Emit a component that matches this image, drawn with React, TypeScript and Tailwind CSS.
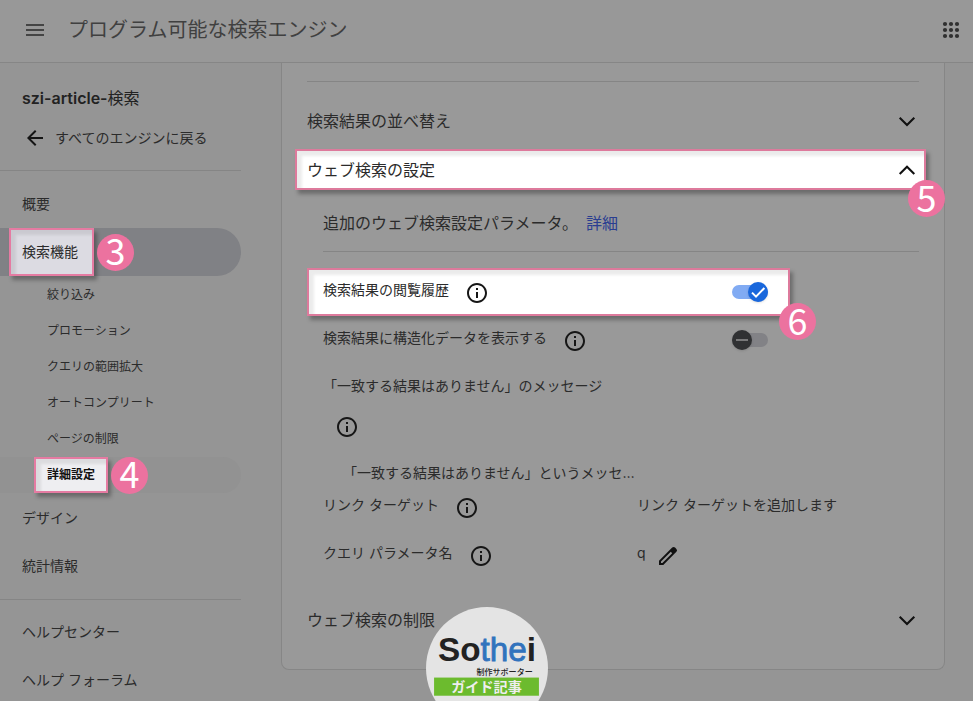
import React, { useState } from 'react';
import { MdArrowBack, MdMenu, MdOutlineInfo } from 'react-icons/md';

const subItems = ['絞り込み', 'プロモーション', 'クエリの範囲拡大', 'オートコンプリート', 'ページの制限'];

const Badge: React.FC<{ n: number; className: string }> = ({ n, className }) => (
  <span
    className={`absolute z-10 flex size-[37px] items-center justify-center rounded-full bg-[#ec729f] pb-1.5 font-['Noto_Sans_CJK_JP',sans-serif] text-4xl leading-9 text-white ${className}`}
  >
    {n}
  </span>
);

const Chevron: React.FC<{ up?: boolean }> = ({ up }) => (
  <svg viewBox="0 0 24 24" className="size-6 text-[#111]" fill="none" stroke="currentColor" strokeWidth="2.1">
    <path d={up ? 'M4.7 16 12 8.7l7.3 7.3' : 'M4.7 8.7 12 16l7.3-7.3'} />
  </svg>
);

const InfoButton: React.FC<{ label: string }> = ({ label }) => (
  <button type="button" aria-label={label} className="mt-px shrink-0 text-[#161616]">
    <MdOutlineInfo size={24} />
  </button>
);

const Toggle: React.FC<{ label: string; initial: boolean }> = ({ label, initial }) => {
  const [on, setOn] = useState(initial);

  return (
    <label className="relative flex h-5 w-9 cursor-pointer items-center">
      <input
        type="checkbox"
        role="switch"
        aria-label={label}
        className="sr-only"
        checked={on}
        onChange={() => setOn(!on)}
      />
      <span className={`h-3.5 w-full rounded-full ${on ? 'bg-[#81abf3]' : 'bg-[#828286]'}`} />
      <span
        className={`absolute flex size-5 items-center justify-center rounded-full shadow ${
          on ? 'right-0 bg-[#1967dc]' : 'left-0 bg-[#303133]'
        }`}
      >
        <svg viewBox="0 0 20 20" className="size-5" fill="none" stroke={on ? '#fff' : '#999'} strokeWidth={on ? 2 : 1.4}>
          <path d={on ? 'M4 10.6 8 14.6 16.4 6' : 'M4 10h12'} />
        </svg>
      </span>
    </label>
  );
};

const Sidebar: React.FC = () => (
  <nav className="w-[281px] shrink-0 bg-[#959595] text-sm text-[#2b2b2b]">
    <h2 className="pt-[23px] pl-[22px] text-base leading-6 text-[#222]">
      <span className="font-semibold">szi-article-</span>検索
    </h2>
    <a href="#engines" className="mt-4 flex h-6 items-center gap-2 pl-[23px]">
      <MdArrowBack size={24} className="text-[#151515]" />
      すべてのエンジンに戻る
    </a>
    <hr className="mt-5 mr-10 border-[#858585]" />
    <a href="#overview" className="mt-[9px] flex h-12 items-center pl-[22px]">概要</a>
    <a href="#features" className="relative mr-10 flex h-12 items-center rounded-r-full bg-[#808185] pl-[9px]">
      <span className="flex h-12 items-center border-2 border-[#e57ba2] bg-[#dcdbe2] pr-3.5 pl-[11px] shadow-[3px_4px_4px_rgba(0,0,0,0.3),inset_5px_5px_3px_rgba(0,0,0,0.08)]">
        検索機能
      </span>
      <Badge n={3} className="left-[97px]" />
    </a>
    <ul className="py-px text-xs">
      {subItems.map((item) => (
        <li key={item}>
          <a href="#sub" className="flex h-9 items-center pl-[47px]">{item}</a>
        </li>
      ))}
      <li>
        <a href="#advanced" className="relative mr-10 flex h-9 items-center rounded-r-full bg-[#929292] pl-[34px]">
          <span className="flex h-9 items-center border-2 border-[#e57ba2] bg-[#eeeef1] px-[11px] font-bold text-[#111] shadow-[3px_4px_4px_rgba(0,0,0,0.3),inset_5px_5px_3px_rgba(0,0,0,0.08)]">
            詳細設定
          </span>
          <Badge n={4} className="left-[111px]" />
        </a>
      </li>
    </ul>
    <a href="#design" className="flex h-12 items-center pl-[22px]">デザイン</a>
    <a href="#stats" className="flex h-12 items-center pl-[22px]">統計情報</a>
    <hr className="mt-[9px] mr-10 border-[#858585]" />
    <a href="#help" className="mt-2 flex h-12 items-center pl-[22px]">ヘルプセンター</a>
    <a href="#forum" className="flex h-12 items-center pl-[22px]">ヘルプ フォーラム</a>
  </nav>
);

const Logo: React.FC = () => (
  <div className="absolute -bottom-7 left-1/2 z-20 size-[122px] -translate-x-1/2 overflow-hidden rounded-full bg-[#e4e4e4]">
    <svg viewBox="0 0 121 121" className="size-full" role="img" aria-label="Sothei 制作サポーター ガイド記事">
      <text x="12" y="54" fontFamily="'Liberation Sans', sans-serif" fontSize="33" fill="#222">
        <tspan fontWeight="bold">So</tspan>
        <tspan fill="#3173bd" stroke="#3173bd" strokeWidth="0.8">the</tspan>
        <tspan fontWeight="bold">i</tspan>
      </text>
      <g fontFamily="'Noto Sans CJK JP', sans-serif">
        <text x="50" y="67" fontSize="8" fontWeight="500" fill="#222">制作サポーター</text>
        <rect x="8" y="70" width="104" height="18" fill="#6cbb2e" />
        <text x="60" y="84" fontSize="14" fontWeight="bold" fill="#eee" textAnchor="middle">ガイド記事</text>
      </g>
    </svg>
  </div>
);

const App: React.FC = () => {
  return (
    <div className="relative flex h-screen flex-col overflow-hidden bg-[#959595] font-[Inter,'Noto_Sans_CJK_JP',sans-serif] text-[#2b2b2b]">
      <header className="flex h-[63px] shrink-0 items-center border-b border-[#868686] bg-[#989898] pr-2.5 pb-0.5 pl-[23px]">
        <button type="button" aria-label="メニュー" className="text-[#444]">
          <MdMenu size={24} />
        </button>
        <h1 className="ml-[21px] flex-1 text-xl text-[#404040]">プログラム可能な検索エンジン</h1>
        <button type="button" aria-label="アプリ" className="text-[#303030]">
          <svg viewBox="0 0 24 24" className="size-6" fill="currentColor">
            {[6, 12, 18].map((y) => [6, 12, 18].map((x) => <circle key={`${x}-${y}`} cx={x} cy={y} r="2.1" />))}
          </svg>
        </button>
      </header>

      <div className="flex min-h-0 flex-1 items-stretch">
        <Sidebar />

        <main className="mr-7 min-w-0 flex-1">
          <section className="rounded-b-lg border border-t-0 border-[#868686] bg-[#999] px-[25px] pt-[18px] pb-6">
            <hr className="border-[#858585]" />
            <button type="button" className="mt-[15px] flex h-12 w-full items-center justify-between">
              検索結果の並べ替え
              <Chevron />
            </button>
            <div className="relative -mr-[7px] -ml-3 pt-1 pb-[5px]">
              <button
                type="button"
                aria-expanded="true"
                className="flex h-[41px] w-full items-center justify-between border-2 border-[#dd7a9c] bg-white pr-[5px] pl-2.5 shadow-[3px_4px_4px_rgba(0,0,0,0.3),inset_5px_5px_3px_rgba(0,0,0,0.08)]"
              >
                ウェブ検索の設定
                <Chevron up />
              </button>
              <Badge n={5} className="-right-[19px] -bottom-[22px]" />
            </div>

            <div className="pl-4">
              <p className="flex h-14 items-center">
                追加のウェブ検索設定パラメータ。
                <a href="#details" className="ml-2 text-[#2a3e91]">詳細</a>
              </p>
              <hr className="border-[#858585]" />

              <div className="text-sm">
                <div className="relative mt-4 -ml-4 flex h-12 w-[483px] items-center justify-between border-2 border-[#dd7a9c] bg-white pr-5 pl-3.5 shadow-[3px_4px_4px_rgba(0,0,0,0.3),inset_5px_5px_3px_rgba(0,0,0,0.08)]">
                  <div className="flex items-start gap-4 leading-5">
                    検索結果の閲覧履歴
                    <InfoButton label="閲覧履歴について" />
                  </div>
                  <Toggle label="検索結果の閲覧履歴" initial={true} />
                  <Badge n={6} className="-right-7 -bottom-[26px]" />
                </div>
                <div className="flex h-12 w-[445px] items-center justify-between">
                  <div className="flex items-start gap-4 leading-5">
                    検索結果に構造化データを表示する
                    <InfoButton label="構造化データについて" />
                  </div>
                  <Toggle label="検索結果に構造化データを表示する" initial={false} />
                </div>

                <div className="w-[318px] pt-3 leading-5">
                  <p>「一致する結果はありません」のメッセージ</p>
                  <div className="mt-[18px] ml-3 flex">
                    <InfoButton label="メッセージについて" />
                  </div>
                  <p className="mt-6 ml-5">「一致する結果はありません」というメッセ…</p>
                </div>

                <div className="flex h-12 items-center leading-5">
                  <div className="flex w-[314px] items-start gap-4">
                    リンク ターゲット
                    <InfoButton label="リンク ターゲットについて" />
                  </div>
                  <div className="h-6">リンク ターゲットを追加します</div>
                </div>
                <div className="flex h-12 items-center leading-5">
                  <div className="flex w-[314px] items-start gap-4">
                    クエリ パラメータ名
                    <InfoButton label="クエリ パラメータ名について" />
                  </div>
                  <div className="flex items-start gap-2.5">
                    q
                    <button type="button" aria-label="編集" className="mt-px text-[#111]">
                      <svg viewBox="0 0 24 24" className="size-6" fill="currentColor">
                        <path d="M5 19h1.4l9.8-9.8-1.4-1.4L5 17.6V19zm-2 2v-4.3L16.2 3.6a2 2 0 0 1 2.85 0L20.4 5a2 2 0 0 1 0 2.8L7.3 21H3z" />
                      </svg>
                    </button>
                  </div>
                </div>
              </div>
            </div>

            <button type="button" className="mt-4 flex h-[50px] w-full items-center justify-between">
              ウェブ検索の制限
              <Chevron />
            </button>
          </section>
        </main>
      </div>

      <Logo />
    </div>
  );
};

export default App;
